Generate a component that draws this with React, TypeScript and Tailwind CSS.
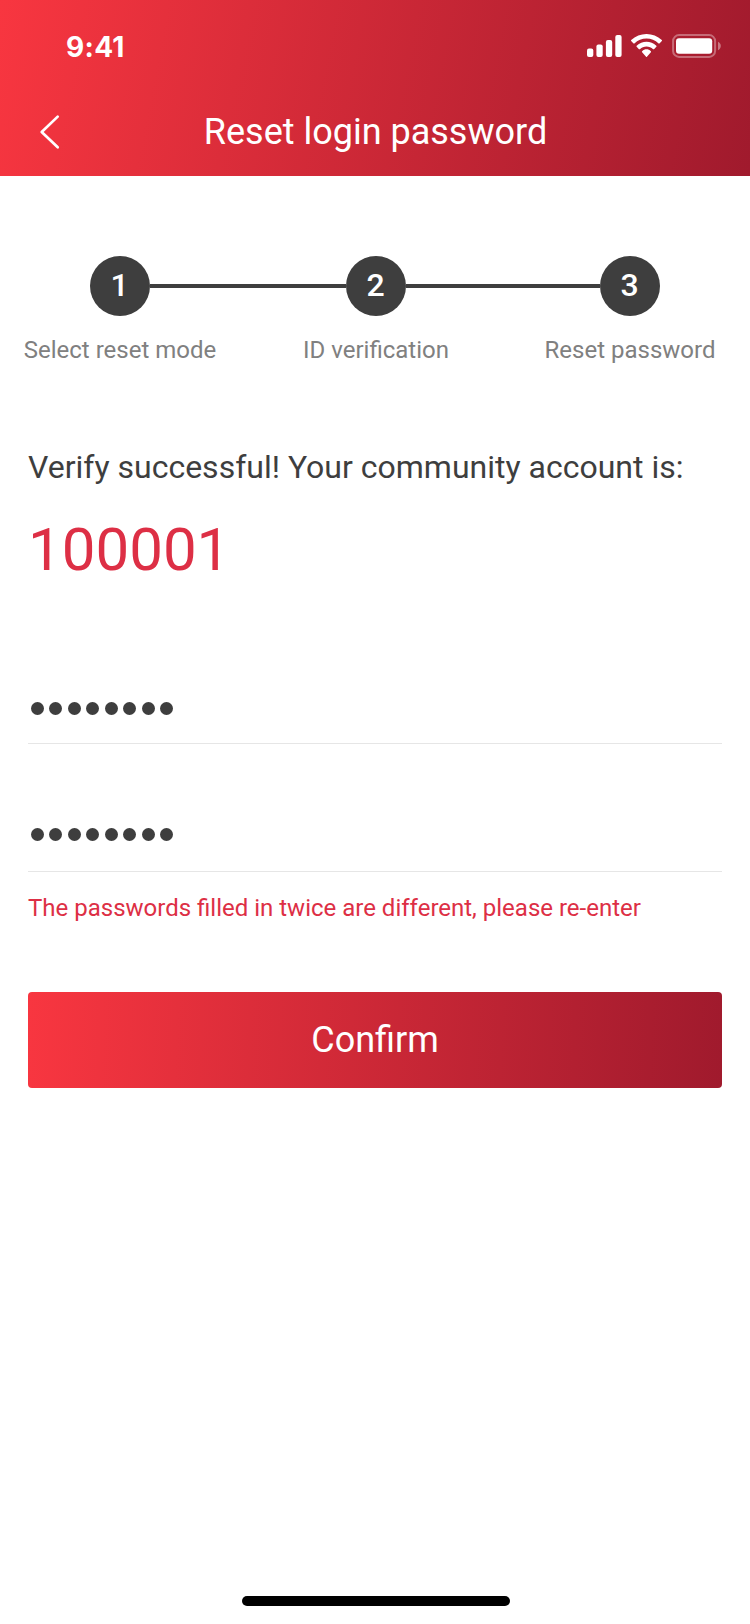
import { Fragment } from "react";

const STEPS = [
  { id: 1, label: "Select reset mode", line: "w-[196px]", column: "ml-[20px]" },
  { id: 2, label: "ID verification", line: "w-[194px]", column: "ml-[56px]" },
  { id: 3, label: "Reset password", line: "", column: "ml-[54px]" },
];

function StatusBar() {
  return (
    <div className="flex h-[88px] items-start justify-between pl-[66px] pr-[28px]">
      <span className="mt-[30px] font-['Inter',sans-serif] text-[28px] font-bold leading-[34px] tracking-[0.3px]">
        9:41
      </span>
      <div className="mt-[34px] flex h-6 items-start">
        <svg className="h-6 w-[35px]" viewBox="0 0 35 24" fill="currentColor">
          <rect x="0" y="14.6" width="6.3" height="8.4" rx="2" />
          <rect x="9.4" y="10.4" width="6.3" height="12.6" rx="2" />
          <rect x="18.9" y="6" width="6.3" height="17" rx="2" />
          <rect x="28.3" y="1" width="6.3" height="22" rx="2" />
        </svg>
        <svg className="ml-[9px] h-[23px] w-[31px]" viewBox="0 0 17.142 12.328" preserveAspectRatio="none" fill="currentColor">
          <path d="M8.571 2.466c2.487 0 4.879.922 6.682 2.576.136.128.353.126.486-.004l1.298-1.263a.342.342 0 0 0-.003-.494C12.303-1.094 4.839-1.094.108 3.281a.342.342 0 0 0-.003.494l1.298 1.263c.133.13.35.132.486.004 1.803-1.654 4.195-2.576 6.682-2.576ZM8.568 6.687c1.357 0 2.666.511 3.672 1.435.136.131.35.129.483-.006l1.288-1.319a.369.369 0 0 0-.006-.519c-3.063-2.891-7.808-2.891-10.872 0a.369.369 0 0 0-.005.519l1.287 1.319c.133.135.347.137.483.006 1.006-.923 2.314-1.435 3.67-1.435ZM11.092 9.48a.395.395 0 0 1-.102.281l-2.177 2.455a.323.323 0 0 1-.483 0L6.153 9.761a.395.395 0 0 1 .011-.556c1.39-1.308 3.425-1.308 4.815 0 .07.07.111.17.113.275Z" />
        </svg>
        <svg className="ml-[10px] h-6 w-[50px]" viewBox="0 0 50 24" fill="none">
          <rect x="1.1" y="1.1" width="42" height="21.8" rx="6" stroke="currentColor" strokeWidth="2" strokeOpacity="0.35" />
          <rect x="4" y="4.2" width="36.2" height="15.6" rx="3" fill="currentColor" />
          <path d="M46 7.8v8.4c1.7-.7 2.8-2.3 2.8-4.2S47.7 8.5 46 7.8Z" fill="currentColor" fillOpacity="0.4" />
        </svg>
      </div>
    </div>
  );
}

function NavBar() {
  return (
    <div className="grid h-[88px] grid-cols-[101px_1fr_100px] items-center">
      <button type="button" aria-label="Back" className="flex pl-[38px]">
        <svg className="h-9 w-6" viewBox="0 0 24 36" fill="none" stroke="currentColor" strokeWidth="2.7" strokeLinecap="round" strokeLinejoin="round">
          <path d="M19.7 2.6 3.7 18l16 15.3" />
        </svg>
      </button>
      <h1 className="text-center text-[36px] leading-[42px]">Reset login password</h1>
    </div>
  );
}

function Stepper() {
  return (
    <div className="mt-20">
      <div className="flex items-center pl-[90px]">
        {STEPS.map((step) => (
          <Fragment key={step.id}>
            <div className="flex size-[60px] items-center justify-center rounded-full bg-[#3e3e3e] pb-0.5 pr-px text-[32px] font-medium leading-[38px] text-white">
              {step.id}
            </div>
            {step.line && <div className={`h-1 bg-[#3e3e3e] ${step.line}`} />}
          </Fragment>
        ))}
      </div>
      <div className="mt-5 flex">
        {STEPS.map((step) => (
          <div key={step.id} className={`w-[200px] text-center text-[24px] leading-[28px] text-[#808080] ${step.column}`}>
            {step.label}
          </div>
        ))}
      </div>
    </div>
  );
}

function PasswordField({ label, className }: { label: string; className: string }) {
  return (
    <div role="img" aria-label={label} className={`flex gap-[5.5px] border-b border-[#e6e6e6] pl-[2.7px] ${className}`}>
      {Array.from({ length: 8 }, (_, i) => (
        <span key={i} className="size-[13px] rounded-full bg-[#3e3e3e]" />
      ))}
    </div>
  );
}

export default function App() {
  return (
    <div className="flex h-[1624px] w-[750px] flex-col bg-white font-['Roboto',sans-serif] text-[#3e3e3e]">
      <header className="h-[176px] bg-[linear-gradient(101deg,#f83640_0%,#a01a2d_100%)] text-white">
        <StatusBar />
        <NavBar />
      </header>
      <Stepper />
      <main className="mt-[84px] flex flex-col px-7">
        <p className="text-[32px] leading-[38px]">Verify successful! Your community account is:</p>
        <p className="mt-7 text-[60px] leading-[71px] text-[#dd2f45]">100001</p>
        <PasswordField label="New password" className="mt-[116.5px] h-[42.5px]" />
        <PasswordField label="Confirm password" className="mt-[83.5px] h-[44.5px]" />
        <p className="mt-[22px] text-[24px] leading-[28px] text-[#dd2f45]">
          The passwords filled in twice are different, please re-enter
        </p>
        <button
          type="button"
          className="mt-[70px] h-24 rounded-[4px] bg-[linear-gradient(92deg,#f83640_0%,#a01a2d_100%)] text-[36px] leading-[42px] text-white"
        >
          Confirm
        </button>
      </main>
      <div className="mb-[18px] ml-[242px] mt-auto h-[10px] w-[268px] rounded-full bg-black" />
    </div>
  );
}
